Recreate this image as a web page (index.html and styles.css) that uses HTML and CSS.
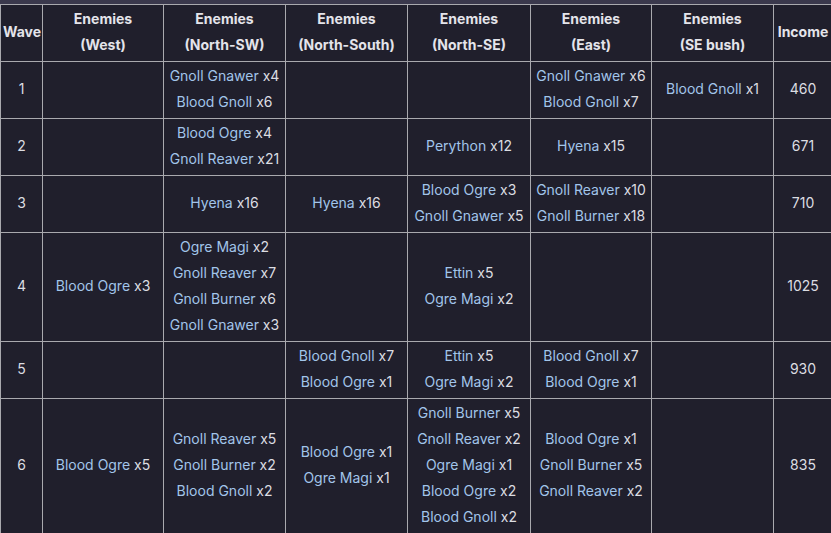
FILE: index.html
```html
<!DOCTYPE html>
<html lang="en">
<head>
<meta charset="utf-8">
<title>Waves</title>
<link rel="stylesheet" href="styles.css">
</head>
<body>
<table class="waves">
  <colgroup>
    <col class="c-wave"><col class="c-w1"><col class="c-w2"><col class="c-w2"><col class="c-w3"><col class="c-w1"><col class="c-w2"><col class="c-inc">
  </colgroup>
  <thead>
    <tr>
      <th>Wave</th>
      <th>Enemies<br>(West)</th>
      <th>Enemies<br>(North-SW)</th>
      <th>Enemies<br>(North-South)</th>
      <th>Enemies<br>(North-SE)</th>
      <th>Enemies<br>(East)</th>
      <th>Enemies<br>(SE bush)</th>
      <th>Income</th>
    </tr>
  </thead>
  <tbody>
    <tr>
      <td class="num">1</td>
      <td></td>
      <td><a>Gnoll Gnawer</a> x4<br><a>Blood Gnoll</a> x6</td>
      <td></td>
      <td></td>
      <td><a>Gnoll Gnawer</a> x6<br><a>Blood Gnoll</a> x7</td>
      <td><a>Blood Gnoll</a> x1</td>
      <td class="num">460</td>
    </tr>
    <tr>
      <td class="num">2</td>
      <td></td>
      <td><a>Blood Ogre</a> x4<br><a>Gnoll Reaver</a> x21</td>
      <td></td>
      <td><a>Perython</a> x12</td>
      <td><a>Hyena</a> x15</td>
      <td></td>
      <td class="num">671</td>
    </tr>
    <tr>
      <td class="num">3</td>
      <td></td>
      <td><a>Hyena</a> x16</td>
      <td><a>Hyena</a> x16</td>
      <td><a>Blood Ogre</a> x3<br><a>Gnoll Gnawer</a> x5</td>
      <td><a>Gnoll Reaver</a> x10<br><a>Gnoll Burner</a> x18</td>
      <td></td>
      <td class="num">710</td>
    </tr>
    <tr>
      <td class="num">4</td>
      <td><a>Blood Ogre</a> x3</td>
      <td><a>Ogre Magi</a> x2<br><a>Gnoll Reaver</a> x7<br><a>Gnoll Burner</a> x6<br><a>Gnoll Gnawer</a> x3</td>
      <td></td>
      <td><a>Ettin</a> x5<br><a>Ogre Magi</a> x2</td>
      <td></td>
      <td></td>
      <td class="num">1025</td>
    </tr>
    <tr>
      <td class="num">5</td>
      <td></td>
      <td></td>
      <td><a>Blood Gnoll</a> x7<br><a>Blood Ogre</a> x1</td>
      <td><a>Ettin</a> x5<br><a>Ogre Magi</a> x2</td>
      <td><a>Blood Gnoll</a> x7<br><a>Blood Ogre</a> x1</td>
      <td></td>
      <td class="num">930</td>
    </tr>
    <tr>
      <td class="num">6</td>
      <td><a>Blood Ogre</a> x5</td>
      <td><a>Gnoll Reaver</a> x5<br><a>Gnoll Burner</a> x2<br><a>Blood Gnoll</a> x2</td>
      <td><a>Blood Ogre</a> x1<br><a>Ogre Magi</a> x1</td>
      <td><a>Gnoll Burner</a> x5<br><a>Gnoll Reaver</a> x2<br><a>Ogre Magi</a> x1<br><a>Blood Ogre</a> x2<br><a>Blood Gnoll</a> x2</td>
      <td><a>Blood Ogre</a> x1<br><a>Gnoll Burner</a> x5<br><a>Gnoll Reaver</a> x2</td>
      <td></td>
      <td class="num">835</td>
    </tr>
  </tbody>
</table>
</body>
</html>
```
FILE: styles.css
```css
html, body {
  margin: 0;
  padding: 0;
  background: #3a384c;
  overflow: hidden;
}
body {
  padding-top: 4px;
  font-family: Inter, "Noto Sans", sans-serif;
  font-size: 14px;
}
.waves {
  border-collapse: collapse;
  table-layout: fixed;
  width: 832px;
  background: #201f2c;
  color: #dcdde2;
}
.c-wave { width: 42px; }
.c-w1 { width: 121px; }
.c-w2 { width: 122px; }
.c-w3 { width: 123px; }
.c-inc { width: 59px; }
.waves th,
.waves td {
  border: 1px solid #a9a9ae;
  padding: 1px 2px 3px;
  line-height: 26px;
  text-align: center;
  vertical-align: middle;
  white-space: nowrap;
}
.waves th {
  font-weight: 700;
  color: #e4e4ea;
}
.waves a {
  color: #a2c5ea;
  text-decoration: none;
}
.waves .num {
  color: #dcdde2;
}
```
